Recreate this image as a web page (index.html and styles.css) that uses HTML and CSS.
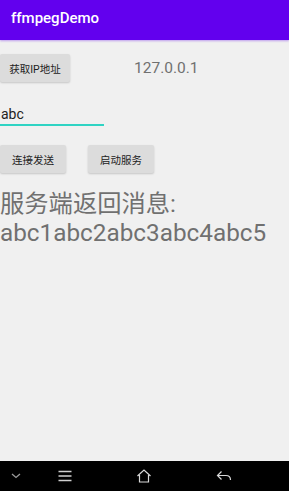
FILE: index.html
```html
<!DOCTYPE html>
<html lang="zh">
<head>
    <meta charset="UTF-8">
    <title>ffmpegDemo</title>
    <link rel="stylesheet" href="styles.css">
</head>
<body>
    <div class="screen">
        <div class="toolbar">ffmpegDemo</div>
        <div class="content">
            <div class="row ip-row">
                <button class="btn">获取IP地址</button>
                <span class="ip">127.0.0.1</span>
            </div>
            <div class="edit">abc</div>
            <div class="row btn-row">
                <button class="btn">连接发送</button>
                <button class="btn">启动服务</button>
            </div>
            <p class="message">服务端返回消息:<br>abc1abc2abc3abc4abc5</p>
        </div>
        <div class="navbar">
            <svg class="nav-icon" width="12" height="8" viewBox="0 0 12 8">
                <path d="M2 2 L6 5.5 L10 2" fill="none" stroke="#9a9a9a" stroke-width="1.3"/>
            </svg>
            <svg class="nav-icon" width="16" height="12" viewBox="0 0 16 12">
                <path d="M1.5 1.5 H14.5 M1.5 6 H14.5 M1.5 10.5 H14.5" fill="none" stroke="#cfcfcf" stroke-width="1.4"/>
            </svg>
            <svg class="nav-icon" width="16" height="16" viewBox="0 0 16 16">
                <path d="M1.5 8 L8 2 L14.5 8 M3.5 7 V14 H12.5 V7" fill="none" stroke="#d8d8d8" stroke-width="1.2"/>
            </svg>
            <svg class="nav-icon" width="16" height="12" viewBox="0 0 16 12">
                <path d="M5.5 1.5 L1.5 5.5 L5.5 9.5 M1.5 5.5 H10 Q14.5 5.5 14.5 10" fill="none" stroke="#d8d8d8" stroke-width="1.2"/>
            </svg>
        </div>
    </div>
</body>
</html>
```

FILE: styles.css
```css
body {
    margin: 0;
    font-family: Roboto, "Noto Sans CJK SC", sans-serif;
    background-color: #f0f0f0;
}
.screen {
    width: 289px;
    height: 491px;
    display: flex;
    flex-direction: column;
    overflow: hidden;
}
.toolbar {
    height: 40px;
    box-sizing: border-box;
    padding: 9px 0 0 11px;
    background-color: #6200ee;
    color: white;
    font-size: 15px;
    font-weight: 500;
    box-shadow: 0 1px 2px rgba(98, 0, 238, 0.35);
}
.content {
    flex: 1;
    padding-top: 14px;
}
.row {
    display: flex;
    align-items: center;
}
.btn {
    height: 28px;
    padding: 0 8px;
    border: none;
    border-radius: 2px;
    background-color: #dcdcdc;
    color: #222;
    font-family: Roboto, "Noto Sans CJK SC", sans-serif;
    font-size: 10.5px;
    box-shadow: 0 1px 2px rgba(0, 0, 0, 0.18);
}
.ip-row .btn {
    width: 70px;
    padding: 0;
}
.ip {
    margin-left: 64px;
    font-size: 15.5px;
    color: #707070;
}
.edit {
    width: 103px;
    margin-top: 22px;
    padding-left: 1px;
    font-size: 14px;
    line-height: 20px;
    color: #222;
    border-bottom: 2px solid #2fd3c3;
}
.btn-row {
    margin-top: 19px;
    gap: 22px;
}
.btn-row .btn {
    width: 66px;
    padding: 0;
}
.message {
    margin: 16px 0 0;
    font-size: 24.3px;
    line-height: 29px;
    color: #707070;
}
.navbar {
    height: 30px;
    background-color: #000;
    display: flex;
    align-items: center;
}
.nav-icon:nth-child(1) { margin-left: 10px; }
.nav-icon:nth-child(2) { margin-left: 35px; }
.nav-icon:nth-child(3) { margin-left: 63px; }
.nav-icon:nth-child(4) { margin-left: 64px; }
```
